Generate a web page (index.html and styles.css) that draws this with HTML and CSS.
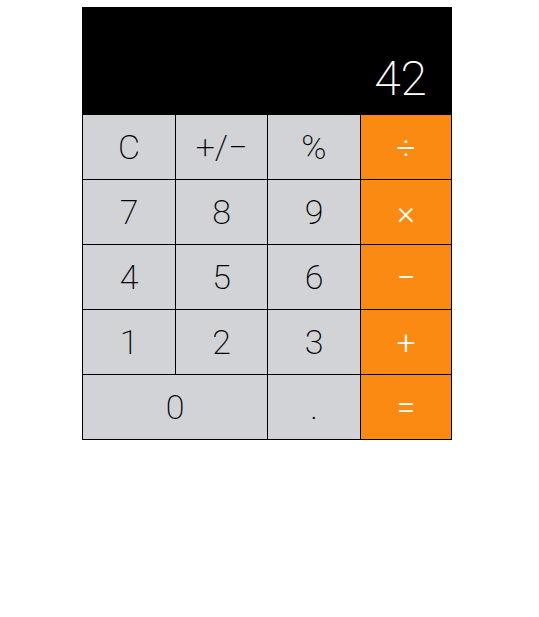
FILE: index.html
```html
<!DOCTYPE html>
<html>
<head>
<meta charset="utf-8">
<link rel="stylesheet" href="styles.css">
</head>
<body>
<div class="page">
  <div class="calc">
    <div class="display"><span class="value">42</span></div>
    <div class="pad">
      <div class="btn">C</div>
      <div class="btn">+/−</div>
      <div class="btn">%</div>
      <div class="btn op">÷</div>
      <div class="btn">7</div>
      <div class="btn">8</div>
      <div class="btn">9</div>
      <div class="btn op">×</div>
      <div class="btn">4</div>
      <div class="btn">5</div>
      <div class="btn">6</div>
      <div class="btn op">−</div>
      <div class="btn">1</div>
      <div class="btn">2</div>
      <div class="btn">3</div>
      <div class="btn op">+</div>
      <div class="btn wide">0</div>
      <div class="btn">.</div>
      <div class="btn op">=</div>
    </div>
  </div>
</div>
</body>
</html>
```
FILE: styles.css
```css
html, body {
  margin: 0;
  padding: 0;
  background: #ffffff;
}
.page {
  padding: 7px 0 0 82px;
}
.calc {
  width: 370px;
  font-family: Roboto, "Liberation Sans", sans-serif;
  font-weight: 300;
}
.display {
  height: 108px;
  background: #000000;
  box-sizing: border-box;
  display: flex;
  align-items: flex-end;
  justify-content: flex-end;
  padding: 0 25px 8px 0;
}
.value {
  color: #ffffff;
  font-size: 48px;
  font-weight: 200;
  line-height: normal;
}
.pad {
  display: grid;
  grid-template-columns: 93px 92px 93px 91px;
  grid-auto-rows: 65px;
  border-left: 1px solid #000000;
  width: 370px;
  box-sizing: border-box;
}
.btn {
  background: #d2d3d7;
  border-right: 1px solid #000000;
  border-bottom: 1px solid #000000;
  display: flex;
  align-items: center;
  justify-content: center;
  font-size: 34px;
  font-weight: 200;
  color: #000000;
}
.btn.op {
  background: #fb8a13;
  color: #ffffff;
  font-weight: 300;
}
.btn.wide {
  grid-column: span 2;
}
```
